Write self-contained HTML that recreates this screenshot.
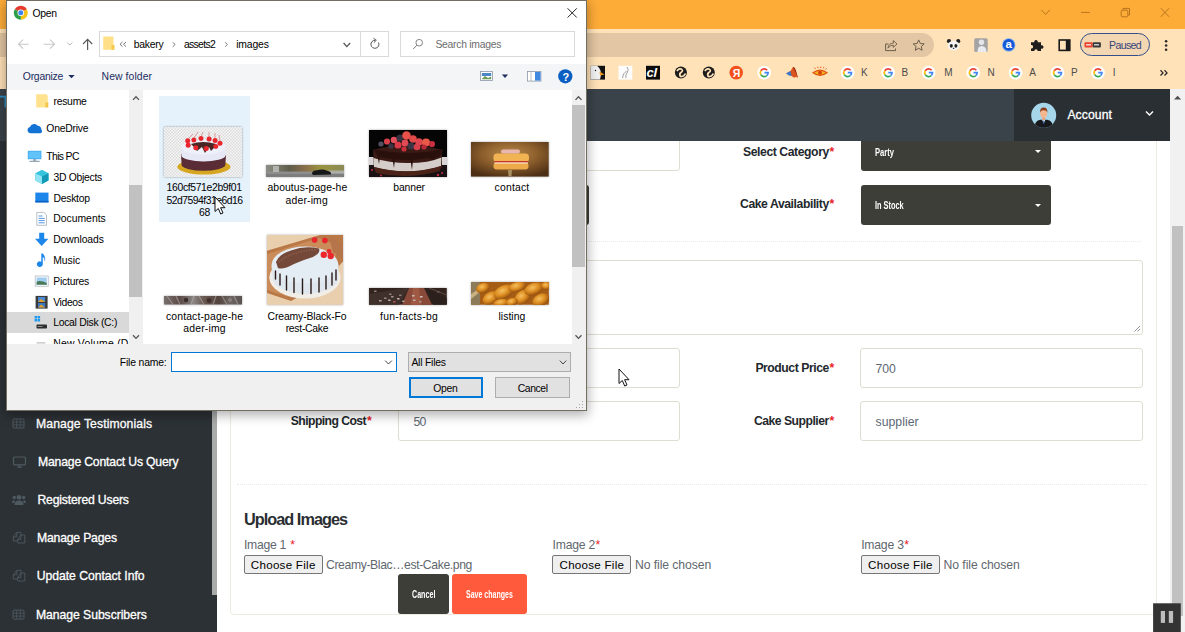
<!DOCTYPE html>
<html lang="en">
<head>
<meta charset="utf-8">
<title>Open</title>
<style>
*{box-sizing:border-box;margin:0;padding:0}
html,body{width:1185px;height:632px;overflow:hidden;background:#fff}
body{position:relative;font-family:"Liberation Sans",sans-serif;color:#23282c}
.a{position:absolute}
.t,.t2{position:absolute;white-space:nowrap;line-height:16px;height:16px}
.b{font-weight:bold}
.m{-webkit-text-stroke:.3px #fff}
/* browser chrome */
#titlebar{left:0;top:0;width:1185px;height:29px;background:#feac38}
#toolbar{left:0;top:29px;width:1185px;height:60px;background:#ffe2b8}
#omni{left:0;top:33px;width:934px;height:24px;background:#e3c6a3;border-radius:0 12px 12px 0}
#paused{left:1080px;top:33px;width:70px;height:23px;border:1px solid #34508c;border-radius:12px;background:#f3d6b2}
/* page */
#hdr{left:0;top:89px;width:1170px;height:52px;background:#3b434a}
#acct{left:1014px;top:89px;width:156px;height:52px;background:#2a2f33}
#side{left:0;top:141px;width:217px;height:491px;background:#2c3135}
#sidethumb{left:212px;top:141px;width:5px;height:454px;background:#a9abab}
#vscroll{left:1170px;top:89px;width:15px;height:543px;background:#f1f1f1}
#vthumb{left:1172px;top:226px;width:11px;height:390px;background:#c1c1c1}
#card{left:230px;top:100px;width:927.4px;height:514.6px;border:1px solid #ebebe2;border-radius:4px;background:#fff}
.inp{position:absolute;height:40px;border:1px solid #deded0;border-radius:3px;background:#fff}
.sel{position:absolute;height:39.8px;border-radius:3px;background:#3d3e38}
.sel:after{content:"";position:absolute;right:10.2px;top:18.6px;border:3.6px solid transparent;border-top:3.8px solid #fff;border-bottom:0}
.dash{position:absolute;height:0;border-top:1px dotted #e9e9e9}
.fbtn{position:absolute;height:19px;border:1px solid #767676;border-radius:2px;background:#efefef}
.btn{position:absolute;height:40px;border-radius:3px}

#dlg{left:6px;top:0;width:580.5px;height:410.6px;background:#fff;border:1px solid rgba(70,60,45,.75);box-shadow:0 3px 11px 1px rgba(0,0,0,.32)}
.bx{position:absolute;border:1px solid #d9d9d9;background:#fff}
#dtool{left:7px;top:63.5px;width:578.5px;height:26px;background:#f4f5f7}
.sb{position:absolute;background:#f0f0f0}
.th{position:absolute;background:#c1c1c1}
#dbot{left:7px;top:343.5px;width:578.5px;height:66.1px;background:#f0f0f0}
.wb{position:absolute;background:#e1e1e1;border:1px solid #adadad}
.clip{position:absolute;overflow:hidden}
</style>
</head>
<body>

<div id="titlebar" class="a"></div>
<div id="toolbar" class="a"></div>
<div id="omni" class="a"></div>
<div id="paused" class="a"></div>
<div id="card" class="a"></div>
<div class="inp" style="left:398px;top:131px;width:282px"></div>
<div class="sel" style="left:398px;top:185px;width:191px"></div>
<div class="sel" style="left:860.6px;top:131.6px;width:190.6px"></div>
<div class="sel" style="left:860.6px;top:185px;width:190.6px"></div>
<div class="dash" style="left:244px;top:241px;width:896px"></div>
<div class="inp" style="left:398px;top:260px;width:745px;height:75px"></div>
<div class="inp" style="left:398px;top:348px;width:282px"></div>
<div class="inp" style="left:860px;top:348px;width:283px"></div>
<div class="inp" style="left:398px;top:401px;width:282px"></div>
<div class="inp" style="left:860px;top:401px;width:283px"></div>
<div class="dash" style="left:237px;top:484px;width:910px"></div>
<div class="fbtn" style="left:244px;top:555px;width:79px"></div>
<div class="fbtn" style="left:552px;top:555px;width:79px"></div>
<div class="fbtn" style="left:861px;top:555px;width:79px"></div>
<div class="btn" style="left:398px;top:574px;width:51px;background:#3d3e38"></div>
<div class="btn" style="left:452px;top:574px;width:75px;background:#ff5a3c"></div>
<div id="hdr" class="a"></div>
<div id="acct" class="a"></div>
<div id="side" class="a"></div>
<div id="sidethumb" class="a"></div>
<div id="vscroll" class="a"></div>
<div id="vthumb" class="a"></div>
<svg class="a" style="left:0;top:0" width="1185" height="632" viewBox="0 0 1185 632"><path d="M1041.300 9.800 L1045.600 14.400 L1049.900 9.800" stroke="#b8741c" stroke-width="1" fill="none"/><path d="M1081 12.400 L1089.800 12.400" stroke="#b8741c" stroke-width="1"/><rect x="1121.200" y="10.200" width="6.600" height="6.600" rx="1" stroke="#b8741c" stroke-width="1" fill="none"/><path d="M1123 10 L1123 8.400 L1129.500 8.400 L1129.500 15 L1128 15" stroke="#b8741c" stroke-width="1" fill="none"/><path d="M1160.800 8.200 L1169.200 16.800 M1169.200 8.200 L1160.800 16.800" stroke="#b8741c" stroke-width="1"/><path d="M888.500 44 L885.600 44 L885.600 50.600 L895.500 50.600 L895.500 48.500" stroke="#6b5d4a" stroke-width="1" fill="none"/><path d="M888 48.200 Q888.300 43.300 893.300 43.200 L893.300 40.600 L897 44 L893.300 47.400 L893.300 45.200 Q890 45 888 48.200Z" stroke="#6b5d4a" stroke-width=".9" fill="none" stroke-linejoin="round"/><path d="M918.700 39.900 L920.300 43.500 L924.200 43.900 L921.300 46.500 L922.100 50.300 L918.700 48.300 L915.300 50.300 L916.100 46.500 L913.200 43.900 L917.100 43.500Z" stroke="#6b5d4a" stroke-width="1" fill="none" stroke-linejoin="round"/><circle cx="949" cy="41.200" r="2.100" fill="#222"/><circle cx="958.200" cy="41.200" r="2.100" fill="#222"/><ellipse cx="953.600" cy="45.600" rx="5.800" ry="4.900" fill="#f4f4f4"/><ellipse cx="951.300" cy="45.800" rx="1.500" ry="1.900" fill="#222"/><ellipse cx="955.900" cy="45.800" rx="1.500" ry="1.900" fill="#222"/><ellipse cx="953.600" cy="48.300" rx=".9" ry=".6" fill="#333"/><rect x="974.200" y="38.200" width="13.500" height="13.800" rx="1.500" fill="#a4a4a4"/><circle cx="981.500" cy="42.300" r="2.700" fill="#e4e6ea"/><path d="M977.500 52 Q977.500 46 981.500 46 Q986.500 46 986.500 52Z" fill="#e9ebf0"/><circle cx="1008.700" cy="44.900" r="6.700" fill="#7aa8ee"/><circle cx="1008.700" cy="44.900" r="5.800" fill="#1558d6"/><path d="M1031 42.300 L1034.300 42.300 A1.800 1.800 0 1 1 1037.700 42.300 L1041 42.300 L1041 45.300 A1.800 1.800 0 1 1 1041 48.600 L1041 51 L1037.700 51 A1.700 1.700 0 1 0 1034.300 51 L1031 51 L1031 48.400 A1.700 1.700 0 1 0 1031 45.100Z" fill="#1e1e1e"/><rect x="1059.200" y="40" width="10.600" height="10.400" fill="none" stroke="#1a1a1a" stroke-width="1.600"/><rect x="1065.800" y="40" width="4" height="10.400" fill="#1a1a1a"/><rect x="1084.500" y="42.200" width="8.200" height="5.300" rx="1" fill="#e8432e"/><rect x="1092.700" y="42.200" width="8.200" height="5.300" rx="1" fill="#3a3a3a"/><rect x="1086" y="44" width="5" height="1.500" fill="#f8d0c8"/><rect x="1094" y="44" width="5" height="1.500" fill="#c8c8c8"/><circle cx="1166.100" cy="41.2" r="1.300" fill="#2a2a2a"/><circle cx="1166.100" cy="45.5" r="1.300" fill="#2a2a2a"/><circle cx="1166.100" cy="49.8" r="1.300" fill="#2a2a2a"/><rect x="590.700" y="65.800" width="14.300" height="13.800" fill="#111"/><path d="M590.700 65.800 L597 65.800 Q603 70 600 79.600 L590.700 79.600Z" fill="#f2f2f2"/><path d="M599.500 71.500 L604.500 74.500 L600 75.500Z" fill="#f0981c"/><circle cx="595.500" cy="70.500" r=".7" fill="#111"/><rect x="618.500" y="65.800" width="13.800" height="13.800" fill="#fcfcfc"/><path d="M627 67 Q629 69 627.500 72 Q625 75 626 78 M626.500 71 L623.500 74 L622.500 78" stroke="#8a8a8a" stroke-width=".8" fill="none"/><rect x="646" y="65.800" width="14" height="13.800" fill="#0a0a0a"/><circle cx="680.9" cy="72.600" r="6" fill="#1d1d1d"/><path d="M676.9 71 Q679.9 67.500 681.9 69.500 Q683.4 71 680.9 72.500 Q678.9 74 680.4 76.500 Q683.9 77 685.4 73.500" stroke="#ffe2b8" stroke-width="1.700" fill="none"/><circle cx="708.8" cy="72.600" r="6" fill="#1d1d1d"/><path d="M704.8 71 Q707.8 67.500 709.8 69.500 Q711.3 71 708.8 72.500 Q706.8 74 708.3 76.500 Q711.8 77 713.3 73.500" stroke="#ffe2b8" stroke-width="1.700" fill="none"/><circle cx="736.200" cy="72.600" r="6.800" fill="#f4501e"/><circle cx="764.2" cy="72.7" r="6.900" fill="#fff"/><path d="M767.24 70.28 A3.9 3.9 0 0 0 760.85 70.75" stroke="#ea4335" stroke-width="1.700" fill="none"/><path d="M760.85 70.75 A3.9 3.9 0 0 0 760.85 74.65" stroke="#fbbc05" stroke-width="1.700" fill="none"/><path d="M760.85 74.65 A3.9 3.9 0 0 0 766.93 75.51" stroke="#34a853" stroke-width="1.700" fill="none"/><path d="M766.93 75.51 A3.9 3.9 0 0 0 768.10 72.70 L764.40 72.70" stroke="#4285f4" stroke-width="1.700" fill="none"/><circle cx="847.6" cy="72.7" r="6.900" fill="#fff"/><path d="M850.64 70.28 A3.9 3.9 0 0 0 844.25 70.75" stroke="#ea4335" stroke-width="1.700" fill="none"/><path d="M844.25 70.75 A3.9 3.9 0 0 0 844.25 74.65" stroke="#fbbc05" stroke-width="1.700" fill="none"/><path d="M844.25 74.65 A3.9 3.9 0 0 0 850.33 75.51" stroke="#34a853" stroke-width="1.700" fill="none"/><path d="M850.33 75.51 A3.9 3.9 0 0 0 851.50 72.70 L847.80 72.70" stroke="#4285f4" stroke-width="1.700" fill="none"/><circle cx="888.1" cy="72.7" r="6.900" fill="#fff"/><path d="M891.14 70.28 A3.9 3.9 0 0 0 884.75 70.75" stroke="#ea4335" stroke-width="1.700" fill="none"/><path d="M884.75 70.75 A3.9 3.9 0 0 0 884.75 74.65" stroke="#fbbc05" stroke-width="1.700" fill="none"/><path d="M884.75 74.65 A3.9 3.9 0 0 0 890.83 75.51" stroke="#34a853" stroke-width="1.700" fill="none"/><path d="M890.83 75.51 A3.9 3.9 0 0 0 892.00 72.70 L888.30 72.70" stroke="#4285f4" stroke-width="1.700" fill="none"/><circle cx="928.6" cy="72.7" r="6.900" fill="#fff"/><path d="M931.64 70.28 A3.9 3.9 0 0 0 925.25 70.75" stroke="#ea4335" stroke-width="1.700" fill="none"/><path d="M925.25 70.75 A3.9 3.9 0 0 0 925.25 74.65" stroke="#fbbc05" stroke-width="1.700" fill="none"/><path d="M925.25 74.65 A3.9 3.9 0 0 0 931.33 75.51" stroke="#34a853" stroke-width="1.700" fill="none"/><path d="M931.33 75.51 A3.9 3.9 0 0 0 932.50 72.70 L928.80 72.70" stroke="#4285f4" stroke-width="1.700" fill="none"/><circle cx="973.3" cy="72.7" r="6.900" fill="#fff"/><path d="M976.34 70.28 A3.9 3.9 0 0 0 969.95 70.75" stroke="#ea4335" stroke-width="1.700" fill="none"/><path d="M969.95 70.75 A3.9 3.9 0 0 0 969.95 74.65" stroke="#fbbc05" stroke-width="1.700" fill="none"/><path d="M969.95 74.65 A3.9 3.9 0 0 0 976.03 75.51" stroke="#34a853" stroke-width="1.700" fill="none"/><path d="M976.03 75.51 A3.9 3.9 0 0 0 977.20 72.70 L973.50 72.70" stroke="#4285f4" stroke-width="1.700" fill="none"/><circle cx="1015.5" cy="72.7" r="6.900" fill="#fff"/><path d="M1018.54 70.28 A3.9 3.9 0 0 0 1012.15 70.75" stroke="#ea4335" stroke-width="1.700" fill="none"/><path d="M1012.15 70.75 A3.9 3.9 0 0 0 1012.15 74.65" stroke="#fbbc05" stroke-width="1.700" fill="none"/><path d="M1012.15 74.65 A3.9 3.9 0 0 0 1018.23 75.51" stroke="#34a853" stroke-width="1.700" fill="none"/><path d="M1018.23 75.51 A3.9 3.9 0 0 0 1019.40 72.70 L1015.70 72.70" stroke="#4285f4" stroke-width="1.700" fill="none"/><circle cx="1057.5" cy="72.7" r="6.900" fill="#fff"/><path d="M1060.54 70.28 A3.9 3.9 0 0 0 1054.15 70.75" stroke="#ea4335" stroke-width="1.700" fill="none"/><path d="M1054.15 70.75 A3.9 3.9 0 0 0 1054.15 74.65" stroke="#fbbc05" stroke-width="1.700" fill="none"/><path d="M1054.15 74.65 A3.9 3.9 0 0 0 1060.23 75.51" stroke="#34a853" stroke-width="1.700" fill="none"/><path d="M1060.23 75.51 A3.9 3.9 0 0 0 1061.40 72.70 L1057.70 72.70" stroke="#4285f4" stroke-width="1.700" fill="none"/><circle cx="1098" cy="72.7" r="6.900" fill="#fff"/><path d="M1101.04 70.28 A3.9 3.9 0 0 0 1094.65 70.75" stroke="#ea4335" stroke-width="1.700" fill="none"/><path d="M1094.65 70.75 A3.9 3.9 0 0 0 1094.65 74.65" stroke="#fbbc05" stroke-width="1.700" fill="none"/><path d="M1094.65 74.65 A3.9 3.9 0 0 0 1100.73 75.51" stroke="#34a853" stroke-width="1.700" fill="none"/><path d="M1100.73 75.51 A3.9 3.9 0 0 0 1101.90 72.70 L1098.20 72.70" stroke="#4285f4" stroke-width="1.700" fill="none"/><path d="M786 73.500 L790.500 71 L793 67 Q794.500 66.500 796 71 L798 78 Q796 76 794 77.800 L791 75.500Z" fill="#d9541e"/><path d="M786 73.500 L790.500 71 L791.500 75.800 L789.500 75.800Z" fill="#3a78c8"/><path d="M793 67 Q794.500 66.500 796 71 L798 78 Q796 73 793 67Z" fill="#8a2a1a"/><path d="M813 72.800 Q820 67.500 827 72.800 Q820 78 813 72.800Z" fill="#f2b41e" stroke="#e0540f" stroke-width="1.100"/><circle cx="820" cy="72.800" r="2" fill="#d8400c"/><path d="M815.500 69 L814.500 67.600 M818 68.200 L817.600 66.700 M820.600 68 L820.800 66.500 M823.200 68.400 L824 67 M825.500 69.500 L826.600 68.300" stroke="#e0540f" stroke-width=".9"/><path d="M1160.500 70.300 L1163 72.900 L1160.500 75.500 M1164.500 70.300 L1167 72.900 L1164.500 75.500" stroke="#2a2a2a" stroke-width="1.300" fill="none"/></svg>
<span class="t2 b" style="left:646.6px;top:64.6px;font-size:13px;color:#fff;letter-spacing:-.4px;font-style:italic">cl</span>
<span class="t2 b" style="left:732.7px;top:64.7px;font-size:10.5px;color:#fff">Я</span>
<span class="t2 b" style="left:1005.6px;top:36.4px;font-size:11.5px;color:#fff">a</span>

<span class="t m" style="left:1067.4px;top:107.3px;font-size:12.2px;color:#fff;letter-spacing:0.09px">Account</span>
<span class="t b" style="left:743.0px;top:143.5px;font-size:12.2px;color:#23282c;letter-spacing:-0.42px">Select Category</span>
<span class="t b" style="left:829.6px;top:143.5px;font-size:12.2px;color:#e8232a">*</span>
<span class="t b" style="left:740.0px;top:196.0px;font-size:12.2px;color:#23282c;letter-spacing:-0.42px">Cake Availability</span>
<span class="t b" style="left:829.6px;top:196.0px;font-size:12.2px;color:#e8232a">*</span>
<span class="t b" style="left:755.4px;top:359.5px;font-size:12.2px;color:#23282c;letter-spacing:-0.45px">Product Price</span>
<span class="t b" style="left:829.6px;top:359.5px;font-size:12.2px;color:#e8232a">*</span>
<span class="t b" style="left:754.0px;top:412.5px;font-size:12.2px;color:#23282c;letter-spacing:-0.51px">Cake Supplier</span>
<span class="t b" style="left:829.6px;top:412.5px;font-size:12.2px;color:#e8232a">*</span>
<span class="t b" style="left:290.8px;top:412.5px;font-size:12.2px;color:#23282c;letter-spacing:-0.57px">Shipping Cost</span>
<span class="t b" style="left:367.0px;top:412.5px;font-size:12.2px;color:#e8232a">*</span>
<span class="t" style="left:875.5px;top:360.5px;font-size:12.2px;color:#5c6873">700</span>
<span class="t" style="left:875.5px;top:413.5px;font-size:12.2px;color:#5c6873;letter-spacing:0.06px">supplier</span>
<span class="t" style="left:413.6px;top:413.5px;font-size:12.2px;color:#5c6873;letter-spacing:-0.86px">50</span>
<span class="t b" style="left:244.0px;top:510.5px;font-size:16.3px;color:#2a2e32;letter-spacing:-0.98px">Upload Images</span>
<span class="t m" style="left:36.0px;top:415.5px;font-size:12.2px;color:#fff;letter-spacing:0.10px">Manage Testimonials</span>
<span class="t m" style="left:38.0px;top:453.7px;font-size:12.2px;color:#fff;letter-spacing:-0.17px">Manage Contact Us Query</span>
<span class="t m" style="left:37.5px;top:492.0px;font-size:12.2px;color:#fff;letter-spacing:-0.18px">Registered Users</span>
<span class="t m" style="left:37.0px;top:530.4px;font-size:12.2px;color:#fff;letter-spacing:-0.18px">Manage Pages</span>
<span class="t m" style="left:36.7px;top:568.4px;font-size:12.2px;color:#fff;letter-spacing:-0.03px">Update Contact Info</span>
<span class="t m" style="left:36.0px;top:606.6px;font-size:12.2px;color:#fff;letter-spacing:-0.05px">Manage Subscribers</span>
<span class="t" style="left:244.0px;top:537.2px;font-size:12.2px;color:#61676e;letter-spacing:-0.29px">Image 1</span>
<span class="t" style="left:290.3px;top:537.2px;font-size:12.2px;color:#e8232a">*</span>
<span class="t" style="left:552.6px;top:537.2px;font-size:12.2px;color:#61676e;letter-spacing:-0.22px">Image 2</span>
<span class="t" style="left:595.6px;top:537.2px;font-size:12.2px;color:#e8232a">*</span>
<span class="t" style="left:861.2px;top:537.2px;font-size:12.2px;color:#61676e;letter-spacing:-0.21px">Image 3</span>
<span class="t" style="left:904.3px;top:537.2px;font-size:12.2px;color:#e8232a">*</span>
<span class="t" style="left:250.8px;top:556.7px;font-size:11.6px;color:#000;letter-spacing:0.27px">Choose File</span>
<span class="t" style="left:559.5px;top:556.7px;font-size:11.6px;color:#000;letter-spacing:0.26px">Choose File</span>
<span class="t" style="left:868.1px;top:556.7px;font-size:11.6px;color:#000;letter-spacing:0.26px">Choose File</span>
<span class="t" style="left:326.0px;top:556.7px;font-size:12.2px;color:#61676e;letter-spacing:-0.38px">Creamy-Blac…est-Cake.png</span>
<span class="t" style="left:635.0px;top:556.7px;font-size:12.2px;color:#61676e;letter-spacing:-0.08px">No file chosen</span>
<span class="t" style="left:943.6px;top:556.7px;font-size:12.2px;color:#61676e;letter-spacing:-0.08px">No file chosen</span>
<span class="t b" style="left:874.5px;top:144.2px;font-size:11.2px;color:#fff;transform:scaleX(0.679);transform-origin:0 50%">Party</span>
<span class="t b" style="left:874.5px;top:197.4px;font-size:11.2px;color:#fff;transform:scaleX(0.660);transform-origin:0 50%">In Stock</span>
<span class="t b" style="left:411.8px;top:586.3px;font-size:11.4px;color:#fff;transform:scaleX(0.626);transform-origin:0 50%">Cancel</span>
<span class="t b" style="left:466.0px;top:586.3px;font-size:11.4px;color:#fff;transform:scaleX(0.616);transform-origin:0 50%">Save changes</span>
<span class="t" style="left:1109.0px;top:37.0px;font-size:10.6px;color:#33437a;letter-spacing:-0.65px">Paused</span>
<span class="t" style="left:861.0px;top:65.0px;font-size:10px;color:#4c4c4c">K</span>
<span class="t" style="left:901.5px;top:65.0px;font-size:10px;color:#4c4c4c">B</span>
<span class="t" style="left:944.3px;top:65.0px;font-size:10px;color:#4c4c4c">M</span>
<span class="t" style="left:987.5px;top:65.0px;font-size:10px;color:#4c4c4c">N</span>
<span class="t" style="left:1029.3px;top:65.0px;font-size:10px;color:#4c4c4c">A</span>
<span class="t" style="left:1071.0px;top:65.0px;font-size:10px;color:#4c4c4c">P</span>
<span class="t" style="left:1112.7px;top:65.0px;font-size:10px;color:#4c4c4c">I</span><svg class="a" style="left:0;top:0" width="1185" height="632" viewBox="0 0 1185 632"><clipPath id="avc"><circle cx="1043.700" cy="115.300" r="12.500"/></clipPath><circle cx="1043.700" cy="115.300" r="12.500" fill="#a5d6ea"/><g clip-path="url(#avc)"><path d="M1034.500 128 Q1034.500 120.500 1040.500 119.800 L1047 119.800 Q1053 120.500 1053 128Z" fill="#16181c"/><path d="M1042 119.500 L1043.700 123.500 L1045.400 119.500Z" fill="#f4f4f4"/><path d="M1043.300 120.500 L1044.100 120.500 L1044.300 123.500 L1043.100 123.500Z" fill="#2a6ac0"/><rect x="1042.300" y="116.500" width="2.800" height="3.500" fill="#e8a078"/><ellipse cx="1043.700" cy="113.300" rx="3.500" ry="4.400" fill="#f4b68e"/><path d="M1040 112.600 Q1039.800 107.600 1043.700 107.500 Q1047.700 107.600 1047.400 112.600 Q1046.500 110 1043.700 110.200 Q1040.900 110 1040 112.600Z" fill="#8a3e1e"/></g><path d="M1146 111.500 L1149.500 115 L1153 111.500" stroke="#fff" stroke-width="1.400" fill="none"/><path d="M1174 99.500 L1177.600 95.700 L1181.200 99.500Z" fill="#505050"/><path d="M0 96.600 L5.300 96.600 L5.300 107.500" stroke="#2d8fc4" stroke-width="1.600" fill="none"/><path d="M1134.500 331.500 L1140 326 M1137.500 331.500 L1140 329" stroke="#777" stroke-width=".8"/><rect x="13" y="419.0" width="11" height="9" rx="1" fill="none" stroke="#4e5960" stroke-width="1"/><path d="M13 422.0 L24 422.0 M13 425.0 L24 425.0 M16.700 419.0 L16.700 428.0 M20.300 419.0 L20.300 428.0" stroke="#4e5960" stroke-width=".8"/><rect x="13.500" y="457" width="12" height="7.800" rx="1" fill="none" stroke="#4e5960" stroke-width="1.200"/><path d="M17 467.200 L22 467.200 M19.500 465 L19.500 467" stroke="#4e5960" stroke-width="1.200"/><circle cx="19" cy="497.300" r="2.400" fill="#4e5960"/><path d="M14.500 505 Q14.500 500.500 19 500.500 Q23.500 500.500 23.500 505Z" fill="#4e5960"/><circle cx="14.300" cy="497.500" r="1.700" fill="#4e5960"/><circle cx="23.700" cy="497.500" r="1.700" fill="#4e5960"/><path d="M12 503 Q12 500 14.600 500 L14.600 503Z M26 503 Q26 500 23.400 500 L23.400 503Z" fill="#4e5960"/><path d="M20.900 535.0 L20.900 532.4 L16.800 532.4 L13.300 536.8 L13.300 541.0 L17.700 541.0 M13.300 536.8 L16.800 536.8 L16.800 532.4" fill="none" stroke="#4e5960" stroke-width=".9"/><path d="M17.700 539.5 L20.900 535.0 L24.800 535.0 L24.800 543.0 L17.700 543.0Z M17.700 539.5 L20.900 539.5 L20.900 535.0" fill="none" stroke="#4e5960" stroke-width=".9"/><path d="M20.900 573.0 L20.900 570.4 L16.800 570.4 L13.300 574.8 L13.300 579.0 L17.700 579.0 M13.300 574.8 L16.800 574.8 L16.800 570.4" fill="none" stroke="#4e5960" stroke-width=".9"/><path d="M17.700 577.5 L20.900 573.0 L24.800 573.0 L24.800 581.0 L17.700 581.0Z M17.700 577.5 L20.900 577.5 L20.900 573.0" fill="none" stroke="#4e5960" stroke-width=".9"/><rect x="13" y="610.1" width="11" height="9" rx="1" fill="none" stroke="#4e5960" stroke-width="1"/><path d="M13 613.1 L24 613.1 M13 616.1 L24 616.1 M16.700 610.1 L16.700 619.1 M20.300 610.1 L20.300 619.1" stroke="#4e5960" stroke-width=".8"/><rect x="1153.100" y="603.300" width="27.700" height="28.700" fill="#333"/><rect x="1160.800" y="611" width="4.200" height="11.900" fill="#bdbdbd"/><rect x="1168.800" y="611" width="4.300" height="11.900" fill="#bdbdbd"/></svg>


<div id="dlg" class="a"></div>
<div class="bx" style="left:99px;top:31px;width:290px;height:26px"></div>
<div class="a" style="left:360px;top:32px;width:1px;height:24px;background:#d9d9d9"></div>
<div class="bx" style="left:400px;top:31px;width:175px;height:26px"></div>
<div id="dtool" class="a"></div>
<div class="sb" style="left:129px;top:89.5px;width:14px;height:254px"></div>
<div class="th" style="left:129px;top:185.4px;width:13px;height:111.4px"></div>
<div class="a" style="left:7px;top:312px;width:122px;height:21px;background:#d9d9d9"></div>
<div class="a" style="left:159px;top:95.5px;width:91px;height:126.5px;background:#e5f1fb"></div>
<div class="sb" style="left:572px;top:89.5px;width:13.5px;height:254px"></div>
<div class="th" style="left:572px;top:105px;width:13px;height:161.5px"></div>
<div class="clip" style="left:7px;top:333px;width:122px;height:10.5px"><span class="t2" style="left:46.2px;top:3.2px;font-size:10.4px;color:#000;letter-spacing:.25px">New Volume (D:)</span></div>
<div id="dbot" class="a"></div>
<div class="a" style="left:171px;top:352px;width:225.6px;height:20px;border:1px solid #0078d7;background:#fff"></div>
<div class="wb" style="left:408px;top:352px;width:162.5px;height:20px"></div>
<div class="wb" style="left:409px;top:377px;width:74px;height:21.3px;border:2px solid #0078d7"></div>
<div class="wb" style="left:495.4px;top:377px;width:74.2px;height:21.3px"></div>
<svg class="a" style="left:163.8px;top:126.6px;filter:drop-shadow(0.6px 0.8px 0.8px rgba(0,0,0,.35))" width="78.6" height="50.4" viewBox="0 0 78.6 50.4"><defs><pattern id="ck" width="3" height="3" patternUnits="userSpaceOnUse"><rect width="3" height="3" fill="#f6f6f6"/><rect width="1.5" height="1.5" fill="#dcdcdc"/><rect x="1.5" y="1.5" width="1.5" height="1.5" fill="#dcdcdc"/></pattern></defs><rect width="78.6" height="50.4" fill="url(#ck)"/><ellipse cx="39.9" cy="39.9" rx="26.6" ry="7.6" fill="#d6a620"/><path d="M17 27 L17.6 38 A22 6.5 0 0 0 61.4 38 L62 28 Z" fill="#5a2c36"/><path d="M17.6 22 L17.4 29 A22.2 6 0 0 0 61.6 29 L61.4 22 A22 8 0 0 0 17.6 22Z" fill="#e6e9f5"/><ellipse cx="39.5" cy="20" rx="22" ry="7.5" fill="#eef0fa"/><path d="M27 17 Q39 13 52 17 L50 21 L47 24 L45 20 L41 26 L38 20 L33 24 L30 20Z" fill="#4a2722"/><circle cx="23.7" cy="13.8" r="2.5" fill="#e8262b"/><circle cx="29.9" cy="12.9" r="2.5" fill="#e8262b"/><circle cx="37" cy="11.6" r="2.5" fill="#e8262b"/><circle cx="45.1" cy="11.9" r="2.5" fill="#e8262b"/><circle cx="51.1" cy="13.5" r="2.5" fill="#e8262b"/><circle cx="56" cy="16.2" r="2.5" fill="#e8262b"/><circle cx="51.8" cy="19.5" r="2.5" fill="#e8262b"/><circle cx="42.3" cy="21.4" r="2.5" fill="#e8262b"/><circle cx="31.8" cy="20.8" r="2.5" fill="#e8262b"/><circle cx="24.2" cy="18.3" r="2.5" fill="#e8262b"/><path d="M24 12 L29 7 M30 11 L34 5 M37 10 L39 5 M45 10 L45 5 M51 12 L51 6 M56 14 L55 8" stroke="#d04a4a" stroke-width=".5" fill="none"/></svg>
<svg class="a" style="left:266.1px;top:164.9px;filter:drop-shadow(0.6px 0.8px 0.8px rgba(0,0,0,.35))" width="78.2" height="12" viewBox="0 0 78.2 12"><defs><linearGradient id="g2" x1="0" x2="1"><stop offset="0" stop-color="#8d8f88"/><stop offset=".3" stop-color="#5e5d4a"/><stop offset=".5" stop-color="#8a6f4a"/><stop offset=".7" stop-color="#9a9440"/><stop offset="1" stop-color="#8a8a55"/></linearGradient></defs><rect width="78.2" height="12" fill="url(#g2)"/><rect y="6.5" width="78.2" height="5.5" fill="#8e8e8e"/><rect y="9" width="78.2" height="3" fill="#7d7d7d"/><rect x="7" y="1" width="6" height="6" fill="#c9cccc" opacity=".7"/><rect x="62" y="5.5" width="16" height="3" fill="#b5b5b0" opacity=".8"/><path d="M46 8.5 Q46 5.5 51 5.2 Q57 3.8 61 5.8 Q65.5 6.5 65 9.5 L47 10Z" fill="#15171a"/></svg>
<svg class="a" style="left:368.9px;top:130px;filter:drop-shadow(0.6px 0.8px 0.8px rgba(0,0,0,.35))" width="78.1" height="46.9" viewBox="0 0 78.1 46.9"><rect width="78.1" height="46.9" fill="#060506"/><rect y="27" width="78.1" height="8" fill="#d9d4d6"/><rect y="35" width="78.1" height="12" fill="#1a1114"/><path d="M4 20 Q39 10 73 20 L73 38 Q39 50 5 40Z" fill="#3a1a14"/><path d="M4.5 28 Q20 33 39 33 Q60 33 72.5 27.5 L72 36 Q58 41.500 39 41.5 Q20 41.500 5 37Z" fill="#d5cdca"/><path d="M5 37 Q39 46 72 36 L71 41 Q39 50 7 43Z" fill="#4a2218"/><path d="M4 19 Q39 27 74 19 Q74 26 66 28 L64 30 L60 28 L44 30 L43 40 L41.500 30 L26 29.500 L25 38 L23.500 29 L11 27 L10 34 L8.500 26 Z" fill="#2a100c"/><circle cx="18" cy="11.5" r="3.07" fill="#d8404a"/><circle cx="25" cy="10" r="3.30" fill="#e0505a"/><circle cx="31" cy="8" r="3.54" fill="#34303e"/><circle cx="37.5" cy="5.5" r="4.25" fill="#e8504a"/><circle cx="44" cy="9" r="3.78" fill="#e24a48"/><circle cx="50" cy="12" r="3.78" fill="#e0454e"/><circle cx="57" cy="12.5" r="4.01" fill="#e85a48"/><circle cx="63" cy="14" r="3.07" fill="#c83040"/><circle cx="29" cy="15" r="3.54" fill="#d83a48"/><circle cx="36" cy="13" r="3.54" fill="#e04a55"/><circle cx="42" cy="16" r="3.54" fill="#3a3646"/><circle cx="48" cy="17" r="3.30" fill="#d8404e"/><circle cx="22" cy="16" r="2.83" fill="#3a3442"/><circle cx="12" cy="14" r="2.60" fill="#555060"/><circle cx="55" cy="17" r="2.60" fill="#b82838"/><circle cx="35" cy="19" r="2.60" fill="#c83040"/><circle cx="3" cy="40" r="1" fill="#c03040"/><circle cx="12" cy="45.5" r="1" fill="#c03040"/><circle cx="69" cy="45" r="1.2" fill="#c03040"/><circle cx="73" cy="43" r="1" fill="#c03040"/></svg>
<svg class="a" style="left:471.2px;top:142.1px;filter:drop-shadow(0.6px 0.8px 0.8px rgba(0,0,0,.35))" width="77.7" height="34.6" viewBox="0 0 77.7 34.6"><defs><radialGradient id="g4" cx=".5" cy=".35" r=".7"><stop offset="0" stop-color="#b98a4c"/><stop offset=".5" stop-color="#8d5f2c"/><stop offset="1" stop-color="#4c2e14"/></radialGradient></defs><rect width="77.7" height="34.6" fill="url(#g4)"/><rect x="17" y="26.500" width="44" height="1.5" fill="#6a4a28"/><path d="M37 28 L41 28 L40.500 34.6 L37.500 34.6Z" fill="#a88c62"/><rect x="22.5" y="11.500" width="35.5" height="8.5" rx="3.5" fill="#f2b352"/><rect x="22.5" y="20.500" width="35" height="7" rx="3.2" fill="#eeaa4a"/><rect x="23.5" y="19" width="33.5" height="1.6" fill="#c8342a"/><rect x="23.5" y="20.400" width="33.5" height="1.2" fill="#f7e6cf"/><rect x="30" y="7.500" width="19" height="4" rx="2" fill="#e9b7ad"/></svg>
<svg class="a" style="left:164px;top:296.1px;filter:drop-shadow(0.6px 0.8px 0.8px rgba(0,0,0,.35))" width="78.1" height="8.5" viewBox="0 0 78.1 8.5"><defs><linearGradient id="g5" x1="0" x2="1"><stop offset="0" stop-color="#77706f"/><stop offset=".2" stop-color="#5c4a46"/><stop offset=".38" stop-color="#8a8583"/><stop offset=".5" stop-color="#6a5a52"/><stop offset=".7" stop-color="#54443e"/><stop offset=".85" stop-color="#6e6663"/><stop offset="1" stop-color="#5a5250"/></linearGradient></defs><rect width="78.1" height="8.5" fill="url(#g5)"/><path d="M3 0 L9 8.5 M12 0 L16 8.5 M30 0 L27 8.5 M35 0 L40 8.5 M52 0 L49 8.5 M58 0 L63 8.5 M70 0 L74 8.5" stroke="#b8b2b0" stroke-width="1.2" opacity=".55"/><circle cx="22" cy="4" r="2.2" fill="#3a2c2a"/><circle cx="45" cy="4.500" r="2.4" fill="#40302c"/><circle cx="66" cy="4" r="2" fill="#8a7f7c"/></svg>
<svg class="a" style="left:267.1px;top:235.1px;filter:drop-shadow(0.6px 0.8px 0.8px rgba(0,0,0,.35))" width="76.2" height="69.8" viewBox="0 0 76.2 69.8"><rect width="76.2" height="69.8" fill="#e9cfae"/><path d="M0 15.700 L53 0 L76.2 0 L76.2 26 L60 46 L24 66 L0 58Z" fill="#b97846"/><path d="M0 19 L52 3 L72 11 L62 40 L22 62 L0 55Z" fill="#c98c5a"/><ellipse cx="38" cy="42.500" rx="35.700" ry="21" fill="#f1eee8"/><path d="M4.5 31 L6 46 A33 16 0 0 0 71 45 L71.500 30Z" fill="#dfe6ee"/><ellipse cx="38" cy="30" rx="33.5" ry="18.5" fill="#e4ecf4"/><path d="M8.5 36 L8.5 44" stroke="#2a1a18" stroke-width="1.400" stroke-linecap="round"/><path d="M13 39 L13 50" stroke="#2a1a18" stroke-width="1.400" stroke-linecap="round"/><path d="M19.5 41 L19.5 55" stroke="#2a1a18" stroke-width="1.400" stroke-linecap="round"/><path d="M27 43 L27 57.5" stroke="#2a1a18" stroke-width="1.400" stroke-linecap="round"/><path d="M35.5 44 L35.5 59" stroke="#2a1a18" stroke-width="1.400" stroke-linecap="round"/><path d="M44 44 L44 58.5" stroke="#2a1a18" stroke-width="1.400" stroke-linecap="round"/><path d="M52 43 L52 57" stroke="#2a1a18" stroke-width="1.400" stroke-linecap="round"/><path d="M59 41 L59 54" stroke="#2a1a18" stroke-width="1.400" stroke-linecap="round"/><path d="M65 38 L65 50" stroke="#2a1a18" stroke-width="1.400" stroke-linecap="round"/><path d="M69 35 L69 45" stroke="#2a1a18" stroke-width="1.400" stroke-linecap="round"/><path d="M9 27 Q12 19 24 15.500 Q38 10 52 13.500 Q54 18 46 22 Q36 25 27 29 Q16 35 11 33Z" fill="#74493a"/><path d="M12 27 Q20 20 30 18 Q40 14 50 15" stroke="#8a5a48" stroke-width="2" fill="none" stroke-dasharray="1.5 1.2"/><circle cx="47.6" cy="5" r="2.8" fill="#e8252a"/><circle cx="57.9" cy="5.5" r="2.8" fill="#e8252a"/><circle cx="56.8" cy="19.8" r="3.2" fill="#ea282c"/><circle cx="63.7" cy="21" r="3.2" fill="#ea282c"/><circle cx="62" cy="16.500" r="2.4" fill="#ea282c"/><path d="M62 2 L76.200 9 L76.200 24 L66 17Z" fill="#b5744a"/></svg>
<svg class="a" style="left:369px;top:288px;filter:drop-shadow(0.6px 0.8px 0.8px rgba(0,0,0,.35))" width="77.8" height="16.7" viewBox="0 0 77.8 16.7"><rect width="77.8" height="16.7" fill="#33231f"/><path d="M40 0 L55 0 L63 16.700 L33 16.700Z" fill="#8a4a3a"/><path d="M44 0 L50 0 L52 16.700 L42 16.700Z" fill="#a05a44"/><path d="M0 6 L36 0 L40 0 L30 16.700 L0 16.700Z" fill="#40302c"/><path d="M56 0 L77.800 10 L77.800 16.700 L64 16.700Z" fill="#2c201d"/><path d="M60 0 L77.800 7" stroke="#6a5a55" stroke-width=".7"/><rect x="10" y="12" width="2.6" height="1.5" rx=".5" fill="#b8a8a0"/><rect x="15" y="9.5" width="2.6" height="1.5" rx=".5" fill="#9a8a84"/><rect x="19" y="11.5" width="2.6" height="1.5" rx=".5" fill="#c8b0a0"/><rect x="22" y="8" width="2.6" height="1.5" rx=".5" fill="#a89890"/><rect x="24" y="13" width="2.6" height="1.5" rx=".5" fill="#b05a48"/><rect x="28" y="10" width="2.6" height="1.5" rx=".5" fill="#c8b8b0"/><rect x="30" y="6.5" width="2.6" height="1.5" rx=".5" fill="#8a7a74"/><rect x="33" y="12.5" width="2.6" height="1.5" rx=".5" fill="#a8a09a"/><rect x="20" y="5.5" width="2.6" height="1.5" rx=".5" fill="#8a7f7a"/><rect x="43" y="7" width="2.6" height="1.5" rx=".5" fill="#c8c0bc"/><rect x="44" y="11.5" width="2.6" height="1.5" rx=".5" fill="#b8b0ac"/><rect x="51" y="8" width="2.6" height="1.5" rx=".5" fill="#d0c8c4"/><rect x="50" y="13" width="2.6" height="1.5" rx=".5" fill="#a89890"/><rect x="5" y="2.5" width="2.6" height="1.5" rx=".5" fill="#8a8480"/><rect x="68" y="3" width="2.6" height="1.5" rx=".5" fill="#6a605c"/></svg>
<svg class="a" style="left:471.1px;top:282px;filter:drop-shadow(0.6px 0.8px 0.8px rgba(0,0,0,.35))" width="77.8" height="22.7" viewBox="0 0 77.8 22.7"><defs><radialGradient id="c8" cx=".45" cy=".35" r=".6"><stop offset="0" stop-color="#f6c060"/><stop offset=".55" stop-color="#dc8c20"/><stop offset="1" stop-color="#9a5410"/></radialGradient></defs><rect width="77.8" height="22.7" fill="#a55c14"/><rect width="9" height="22.7" fill="#8c7a58"/><path d="M0 12 L9 6 L9 10 L0 17Z" fill="#c8b080"/><ellipse cx="12" cy="6" rx="7" ry="5" fill="url(#c8)" transform="rotate(-20 12 6)"/><ellipse cx="20" cy="16" rx="9" ry="6" fill="url(#c8)" transform="rotate(-30 20 16)"/><ellipse cx="33" cy="10" rx="11" ry="6.5" fill="url(#c8)" transform="rotate(-25 33 10)"/><ellipse cx="30" cy="21" rx="8" ry="4" fill="url(#c8)" transform="rotate(-10 30 21)"/><ellipse cx="46" cy="5" rx="9" ry="5" fill="url(#c8)" transform="rotate(-15 46 5)"/><ellipse cx="52" cy="15" rx="9" ry="6.5" fill="url(#c8)" transform="rotate(-35 52 15)"/><ellipse cx="63" cy="7" rx="10" ry="6" fill="url(#c8)" transform="rotate(-20 63 7)"/><ellipse cx="70" cy="18" rx="9" ry="6" fill="url(#c8)" transform="rotate(-25 70 18)"/><ellipse cx="41" cy="20" rx="6" ry="4" fill="url(#c8)" transform="rotate(-20 41 20)"/><ellipse cx="75" cy="4" rx="5" ry="4" fill="url(#c8)" transform="rotate(0 75 4)"/></svg>
<svg class="a" style="left:0;top:0" width="600" height="420" viewBox="0 0 600 420"><g transform="translate(20.8 12.7)"><circle r="7" fill="#fff"/><path d="M0 0 L-6.06 -3.5 A7 7 0 0 1 6.06 -3.5Z" fill="#e33b2e"/><path d="M0 0 L6.06 -3.5 A7 7 0 0 1 0 7Z" fill="#f7c518"/><path d="M0 0 L0 7 A7 7 0 0 1 -6.06 -3.5Z" fill="#2f9e49"/><circle r="3.3" fill="#fff"/><circle r="2.5" fill="#3f83ee"/></g><path d="M567.6 8.3 L576.8 17.500 M576.8 8.3 L567.6 17.500" stroke="#222" stroke-width="1"/><path d="M28.700 44.2 L18.500 44.2 M23 39.700 L18.500 44.2 L23 48.700" stroke="#c8c8c8" stroke-width="1.1" fill="none"/><path d="M43.500 44.2 L54.500 44.2 M50 39.700 L54.500 44.2 L50 48.700" stroke="#c8c8c8" stroke-width="1.1" fill="none"/><path d="M67.3 42.5 L69.8 45.1 L72.3 42.5" stroke="#b5b5b5" stroke-width="1" fill="none"/><path d="M87.600 50 L87.600 39.500 M83 44 L87.600 39.400 L92.200 44" stroke="#5a5a5a" stroke-width="1.2" fill="none"/><path d="M103.200 36.5 L113.500 36.5 L113.500 49.8 L103.200 49.8Z" fill="#ffe089"/><path d="M111.500 45 L114.500 45 L114.500 49.8 L111.500 49.8Z" fill="#f5c84c"/><path d="M122.500 42 L120 44.3 L122.500 46.6 M126 42 L123.500 44.3 L126 46.600" stroke="#555" stroke-width=".8" fill="none"/><path d="M172.800 42.3 L175 44.5 L172.800 46.700" stroke="#666" stroke-width=".9" fill="none"/><path d="M225.200 42.3 L227.400 44.5 L225.200 46.700" stroke="#666" stroke-width=".9" fill="none"/><path d="M343.6 43.0 L346.8 46.6 L350.1 43.0" stroke="#555" stroke-width="1.3" fill="none"/><path d="M378.500 42.500 A4 4 0 1 1 375.200 40.300" stroke="#555" stroke-width="1" fill="none"/><path d="M373.500 38.300 L376.300 40.300 L373.800 42.600" stroke="#555" stroke-width="1" fill="none"/><circle cx="419.200" cy="42.700" r="3.300" stroke="#777" stroke-width=".9" fill="none"/><path d="M416.900 45.200 L413.300 48.900" stroke="#777" stroke-width="1"/><path d="M68.3 74.9 L74.7 74.9 L71.5 78.3Z" fill="#1c2d5e"/><rect x="480.500" y="71.500" width="12" height="9" fill="#fff" stroke="#8a97a8" stroke-width=".8"/><rect x="481.800" y="73" width="9.400" height="3" fill="#4a86c8"/><path d="M481.800 79 L485 76 L488 78 L491.200 76.500 L491.200 79.200 L481.800 79.200Z" fill="#6a9a5a"/><path d="M501.9 74.6 L508.1 74.6 L505.0 78.0Z" fill="#1c2d5e"/><rect x="527.500" y="71.500" width="13.400" height="9.600" fill="#fff" stroke="#8a97a8" stroke-width=".8"/><rect x="535" y="72" width="5.500" height="8.600" fill="#3f8ae0"/><path d="M531 72 L531 81" stroke="#8a97a8" stroke-width=".6"/><circle cx="565.300" cy="76.300" r="7.100" fill="#0a5fc0"/><path d="M133.0 99.9 L136.0 96.7 L139.0 99.9" stroke="#555" stroke-width="1.3" fill="none"/><path d="M133.0 335.2 L136.0 338.4 L139.0 335.2" stroke="#555" stroke-width="1.3" fill="none"/><path d="M575.5 99.9 L578.5 96.7 L581.5 99.9" stroke="#555" stroke-width="1.3" fill="none"/><path d="M575.5 335.2 L578.5 338.4 L581.5 335.2" stroke="#555" stroke-width="1.3" fill="none"/><path d="M385.2 360.6 L388.5 364.0 L391.8 360.6" stroke="#444" stroke-width="1" fill="none"/><path d="M559.8 360.6 L563.0 364.0 L566.2 360.6" stroke="#444" stroke-width="1" fill="none"/><rect x="582" y="401" width="1" height="1" fill="#a5a5a5"/><rect x="582" y="404" width="1" height="1" fill="#a5a5a5"/><rect x="582" y="407" width="1" height="1" fill="#a5a5a5"/><rect x="579" y="404" width="1" height="1" fill="#a5a5a5"/><rect x="579" y="407" width="1" height="1" fill="#a5a5a5"/><rect x="576" y="407" width="1" height="1" fill="#a5a5a5"/></svg>
<span class="t2 b" style="left:562.6px;top:68.6px;font-size:11px;color:#fff">?</span>
<svg class="a" style="left:0;top:0" width="600" height="420" viewBox="0 0 600 420"><path d="M36.200 94.3 L46.500 94.3 L47.800 96 L47.800 107.4 L36.200 107.4Z" fill="#ffe28d"/><path d="M45.500 102.500 L48.300 102.500 L48.300 107.4 L45.500 107.4Z" fill="#f2c548"/><path d="M30.500 133.2 A3.200 3.200 0 0 1 30 126.900 A4.400 4.400 0 0 1 37.800 125.800 A3.600 3.600 0 0 1 41.400 129.700 A2 2 0 0 1 40 133.200Z" fill="#1373d4"/><rect x="27.800" y="150.800" width="13.600" height="8.400" fill="#3fa9f0"/><rect x="28.600" y="151.600" width="12" height="6.800" fill="#62c3fa"/><rect x="33" y="159.200" width="3.200" height="1.600" fill="#8aa0b0"/><rect x="29.500" y="160.800" width="10.200" height="1" fill="#7f95a5"/><path d="M35.300 173.200 L42 169.800 L48.500 173.200 L48.500 180.600 L42 184 L35.300 180.600Z" fill="#35c3de"/><path d="M35.300 173.200 L42 176.400 L42 184 L35.300 180.600Z" fill="#8fe3f2"/><path d="M42 176.400 L48.500 173.200 L48.500 180.600 L42 184Z" fill="#139ab8"/><rect x="35.300" y="192.600" width="13.200" height="9.800" fill="#1d86ea"/><rect x="35.300" y="200.800" width="13.200" height="1.600" fill="#0f62c0"/><path d="M36.800 212.400 L43.800 212.400 L46.500 215 L46.500 225.300 L36.800 225.300Z" fill="#fff" stroke="#9aa4ae" stroke-width=".7"/><path d="M38.600 216 L42.500 216 M38.600 218.400 L44.700 218.400 M38.600 220.600 L44.700 220.600 M38.600 222.800 L44.700 222.800" stroke="#3f8ae0" stroke-width=".9"/><path d="M39.200 232.800 L44.200 232.800 L44.200 238.800 L48.400 238.800 L41.700 246 L35 238.800 L39.200 238.800Z" fill="#1d86ea"/><path d="M41.300 253.400 L42.800 253.400 Q46.500 257.500 44.600 261.800 Q45 258 42.800 257 L42.800 264 A3 2.800 0 1 1 41.300 261.700Z" fill="#1d86ea"/><rect x="35.200" y="276" width="13" height="10.200" fill="#fff" stroke="#a8b0b8" stroke-width=".7"/><rect x="36.600" y="277.500" width="10.200" height="7.200" fill="#9ecdf0"/><path d="M36.600 284.700 L36.600 281.800 Q40 279.500 46.800 283 L46.800 284.700Z" fill="#4a7a58"/><rect x="35.600" y="295.900" width="12" height="12.700" fill="#3a3a3a"/><rect x="38" y="297" width="7.200" height="5" fill="#4a8ad0"/><rect x="38" y="303" width="7.200" height="4.600" fill="#3a78c0"/><path d="M38 302 L41 299 L45.200 302Z M38 307.600 L41 304.500 L45.200 307.600Z" fill="#e0a030"/><rect x="34.600" y="316" width="2.500" height="2.500" fill="#1d9af0"/><rect x="37.600" y="316" width="2.500" height="2.500" fill="#1d9af0"/><rect x="34.600" y="319" width="2.500" height="2.500" fill="#1d9af0"/><rect x="37.600" y="319" width="2.500" height="2.500" fill="#1d9af0"/><rect x="36.500" y="324.600" width="10.500" height="4" rx=".8" fill="#2e2e2e"/><rect x="37.500" y="326" width="5" height="1" fill="#8a8a8a"/><rect x="36.500" y="342.300" width="9" height="1.200" fill="#bdbdbd"/></svg>

<span class="t" style="left:32.6px;top:5.5px;font-size:10.4px;color:#000;letter-spacing:-0.34px">Open</span>
<span class="t" style="left:133.7px;top:37.1px;font-size:10.4px;color:#000;letter-spacing:-0.22px">bakery</span>
<span class="t" style="left:184.0px;top:37.1px;font-size:10.4px;color:#000;letter-spacing:-0.69px">assets2</span>
<span class="t" style="left:236.2px;top:37.1px;font-size:10.4px;color:#000;letter-spacing:-0.16px">images</span>
<span class="t" style="left:435.4px;top:37.1px;font-size:10.4px;color:#6d6d6d;letter-spacing:-0.28px">Search images</span>
<span class="t" style="left:22.8px;top:69.1px;font-size:10.4px;color:#1c2d5e;letter-spacing:-0.24px">Organize</span>
<span class="t" style="left:101.6px;top:69.1px;font-size:10.4px;color:#1c2d5e;letter-spacing:0.08px">New folder</span>
<span class="t" style="left:53.5px;top:93.6px;font-size:10.4px;color:#000;letter-spacing:-0.27px">resume</span>
<span class="t" style="left:46.3px;top:121.0px;font-size:10.4px;color:#000;letter-spacing:-0.24px">OneDrive</span>
<span class="t" style="left:46.3px;top:148.8px;font-size:10.4px;color:#000;letter-spacing:-0.64px">This PC</span>
<span class="t" style="left:53.5px;top:169.8px;font-size:10.4px;color:#000;letter-spacing:-0.29px">3D Objects</span>
<span class="t" style="left:53.5px;top:190.6px;font-size:10.4px;color:#000;letter-spacing:-0.27px">Desktop</span>
<span class="t" style="left:53.2px;top:211.4px;font-size:10.4px;color:#000">Documents</span>
<span class="t" style="left:53.2px;top:232.2px;font-size:10.4px;color:#000;letter-spacing:-0.08px">Downloads</span>
<span class="t" style="left:53.2px;top:253.0px;font-size:10.4px;color:#000;letter-spacing:-0.04px">Music</span>
<span class="t" style="left:53.2px;top:273.8px;font-size:10.4px;color:#000;letter-spacing:-0.22px">Pictures</span>
<span class="t" style="left:53.2px;top:294.6px;font-size:10.4px;color:#000;letter-spacing:-0.36px">Videos</span>
<span class="t" style="left:53.2px;top:315.4px;font-size:10.4px;color:#000;letter-spacing:-0.28px">Local Disk (C:)</span>
<span class="t" style="left:119.8px;top:354.8px;font-size:10.4px;color:#000;letter-spacing:-0.18px">File name:</span>
<span class="t" style="left:411.4px;top:354.8px;font-size:10.4px;color:#000;letter-spacing:-0.22px">All Files</span>
<span class="t" style="left:433.3px;top:380.5px;font-size:10.4px;color:#000;letter-spacing:-0.31px">Open</span>
<span class="t" style="left:517.7px;top:380.5px;font-size:10.4px;color:#000;letter-spacing:-0.41px">Cancel</span>
<span class="t" style="left:166.6px;top:180.4px;font-size:10.4px;color:#000;letter-spacing:-0.35px">160cf571e2b9f01</span>
<span class="t" style="left:166.6px;top:192.8px;font-size:10.4px;color:#000;letter-spacing:-0.53px">52d7594f31e6d16</span>
<span class="t" style="left:199.0px;top:205.3px;font-size:10.4px;color:#000;letter-spacing:-0.36px">68</span>
<span class="t" style="left:267.4px;top:180.4px;font-size:10.4px;color:#000;letter-spacing:0.09px">aboutus-page-he</span>
<span class="t" style="left:285.6px;top:192.8px;font-size:10.4px;color:#000;letter-spacing:0.16px">ader-img</span>
<span class="t" style="left:393.3px;top:180.4px;font-size:10.4px;color:#000;letter-spacing:-0.13px">banner</span>
<span class="t" style="left:494.6px;top:180.4px;font-size:10.4px;color:#000;letter-spacing:0.18px">contact</span>
<span class="t" style="left:166.0px;top:308.8px;font-size:10.4px;color:#000;letter-spacing:0.14px">contact-page-he</span>
<span class="t" style="left:183.3px;top:321.2px;font-size:10.4px;color:#000;letter-spacing:0.17px">ader-img</span>
<span class="t" style="left:267.6px;top:308.8px;font-size:10.4px;color:#000;letter-spacing:-0.14px">Creamy-Black-Fo</span>
<span class="t" style="left:285.7px;top:321.2px;font-size:10.4px;color:#000;letter-spacing:-0.28px">rest-Cake</span>
<span class="t" style="left:380.1px;top:308.8px;font-size:10.4px;color:#000;letter-spacing:0.25px">fun-facts-bg</span>
<span class="t" style="left:498.4px;top:308.8px;font-size:10.4px;color:#000;letter-spacing:0.07px">listing</span><svg class="a" style="left:213.5px;top:195.5px;" width="12" height="19" viewBox="-1 -1 12 19"><path d="M0 0 L0 14.500 L3.300 11.500 L5.700 17 L8 16 L5.600 10.700 L10 10.700Z" fill="#fff" stroke="#111" stroke-width="1" stroke-linejoin="round"/></svg>
<svg class="a" style="left:618px;top:367.5px;" width="12" height="19" viewBox="-1 -1 12 19"><path d="M0 0 L0 14.500 L3.300 11.500 L5.700 17 L8 16 L5.600 10.700 L10 10.700Z" fill="#fff" stroke="#111" stroke-width="1" stroke-linejoin="round"/></svg>

</body>
</html>
